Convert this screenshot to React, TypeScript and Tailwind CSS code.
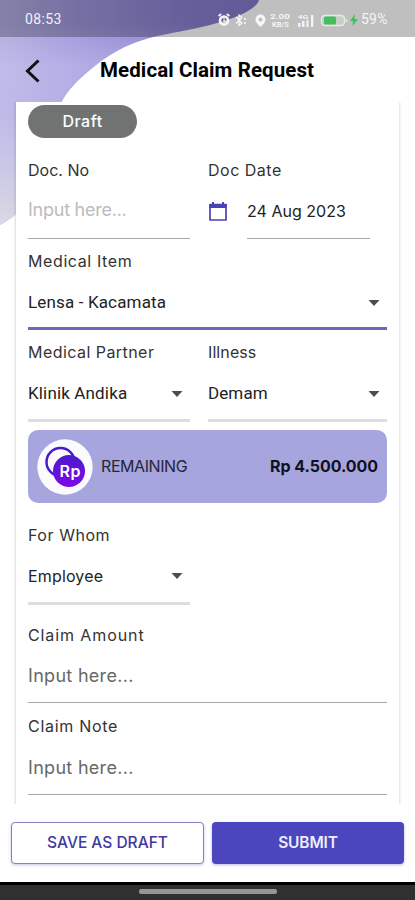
import type { ReactNode } from "react";

function Caret() {
  return (
    <svg width="12" height="6" viewBox="0 0 12 6" className="mr-[7px] shrink-0">
      <path d="M0.5 0h11L6 6z" fill="#4d4d4d" />
    </svg>
  );
}

type FieldProps = {
  label: string;
  labelClass?: string;
  lineClass?: string;
  sizeClass?: string;
  children: ReactNode;
};

function Field({ label, labelClass = "", lineClass = "border-b border-[#a8a8a8] pt-[2px]", sizeClass = "h-[81px]", children }: FieldProps) {
  return (
    <div className={`flex flex-col ${sizeClass}`}>
      <div className="h-6 text-[16px] leading-6 whitespace-nowrap text-[#333]">
        <span className={labelClass}>{label}</span>
      </div>
      <div className={`flex flex-1 items-center justify-between whitespace-nowrap ${lineClass}`}>{children}</div>
    </div>
  );
}

function Backdrop() {
  const shape =
    "M0 0H259C256 10 236 18 210 25C190 30 170 33 153 37C125 44 105 57 90 70C78 80 68 90 62 101C44 150 42 205 0 225Z";
  return (
    <svg className="absolute top-0 left-0" width="260" height="230" viewBox="0 0 260 230">
      <defs>
        <linearGradient id="wave" x1="0" y1="0" x2="1" y2="0">
          <stop offset="0" stopColor="#b0ade0" />
          <stop offset="0.3" stopColor="#9d96da" />
          <stop offset="0.75" stopColor="#877dcd" />
          <stop offset="1" stopColor="#837acc" />
        </linearGradient>
        <linearGradient id="fade" x1="0" y1="0" x2="0" y2="1">
          <stop offset="0.1" stopColor="#e4e1f8" stopOpacity="0" />
          <stop offset="0.3" stopColor="#dcd9fa" stopOpacity="0.35" />
          <stop offset="0.5" stopColor="#d5d0f2" stopOpacity="0.4" />
          <stop offset="1" stopColor="#dcdbe2" stopOpacity="0.95" />
        </linearGradient>
      </defs>
      <path d={shape} fill="url(#wave)" />
      <path d={shape} fill="url(#fade)" />
    </svg>
  );
}

function StatusIcons() {
  return (
    <svg width="132" height="18" viewBox="0 0 132 18" className="shrink-0">
      <g fill="none" stroke="#f7f7f7">
        <circle cx="7" cy="9.5" r="4" strokeWidth="2.6" />
        <path d="M7 7v3l2 1" strokeWidth="1.2" />
        <path d="M1.5 5l2.7-2M12.500 5l-2.700-2" strokeWidth="1.800" />
        <path d="M19 6l6 6-3 2.500V4l3 2.500-6 6" strokeWidth="1.200" />
        <path d="M28 7v2M28 11v2" strokeWidth="1.600" />
      </g>
      <path d="M43.500 3.500a5 5 0 0 0-5 5c0 3.500 5 7.500 5 7.500s5-4 5-7.500a5 5 0 0 0-5-5zm0 3a2 2 0 1 1 0 4 2 2 0 0 1 0-4z" fill="#f7f7f7" fillRule="evenodd" />
      <g fill="#f4f4f4" fontFamily="Roboto, sans-serif" fontWeight="700">
        <text x="53" y="8" fontSize="7.500" textLength="20" lengthAdjust="spacingAndGlyphs">2.00</text>
        <text x="55" y="16" fontSize="6.500" textLength="17" lengthAdjust="spacingAndGlyphs">KB/S</text>
        <text x="80.500" y="7.500" fontSize="6" textLength="11" lengthAdjust="spacingAndGlyphs">4G</text>
      </g>
      <path d="M81 12h2.500v4H81zM85 10h2.500v6H85zM89.500 9h2v7h-2zM94 4h2.300v12H94z" fill="#f4f4f4" />
      <rect x="104.500" y="4.500" width="23" height="10" rx="3.500" fill="#c3d0c5" stroke="#e8e8e8" strokeWidth="1.300" />
      <rect x="107" y="5.500" width="12" height="8" rx="1.500" fill="#43bd5d" />
      <path d="M129.500 8v3" stroke="#e8e8e8" strokeWidth="1.500" />
    </svg>
  );
}

function Bolt() {
  return (
    <svg width="8" height="12" viewBox="0 0 8 12" className="mt-px ml-px shrink-0">
      <path d="M5 0L0 7h3L2.500 12 8 5H4.500z" fill="#43bd5d" />
    </svg>
  );
}

function RupiahBadge() {
  return (
    <svg width="56" height="56" viewBox="0 0 56 56" className="shrink-0">
      <defs>
        <linearGradient id="coin" x1="0" y1="0" x2="0" y2="1">
          <stop offset="0" stopColor="#4b1bcb" />
          <stop offset="1" stopColor="#7f08e6" />
        </linearGradient>
      </defs>
      <circle cx="28" cy="28" r="27.700" fill="#fbfaff" />
      <circle cx="23.500" cy="23" r="14" fill="none" stroke="#4b1bcb" strokeWidth="2.500" />
      <circle cx="32" cy="32" r="16" fill="url(#coin)" />
      <text x="22.500" y="37.500" fontFamily="Inter, sans-serif" fontSize="16" fontWeight="600" fill="#fff" textLength="21">Rp</text>
    </svg>
  );
}

export default function App() {
  const grayLine = "border-b-[3px] border-[#dedede] pt-[5px]";
  return (
    <div className="relative flex h-[900px] w-[415px] flex-col overflow-hidden bg-white font-['Inter',sans-serif] text-[#222]">
      <Backdrop />
      <div className="relative flex h-[37px] shrink-0 items-center bg-black/25 pt-[2px] text-white">
        <span className="ml-[25px] w-[192px] font-['Roboto',sans-serif] text-[14px] tracking-[0.35px] text-[#f1f0fa]">08:53</span>
        <StatusIcons />
        <Bolt />
        <span className="ml-[3px] font-['Roboto',sans-serif] text-[14px] tracking-[0.2px] text-[#f4f4f4]">59%</span>
      </div>
      <header className="relative flex h-[65px] shrink-0 items-center pt-[2px]">
        <svg width="16" height="24" viewBox="0 0 16 24" className="ml-[25px] shrink-0">
          <path d="M13.500 1.500L2.500 12l11 10.500" fill="none" stroke="#111" strokeWidth="3" />
        </svg>
        <h1 className="ml-[59px] font-['Roboto',sans-serif] text-[20.500px] font-bold tracking-[0.1px] whitespace-nowrap text-black">Medical Claim Request</h1>
      </header>
      <div className="relative h-[702px] shrink-0 overflow-hidden px-4">
        <main className="h-[720px] w-[383px] bg-white px-3 pt-[3px] shadow-[0_0_3px_rgba(0,0,0,0.25)]">
          <div className="flex h-[33px] w-[109px] items-center justify-center rounded-full bg-[#707372] pb-[2px] text-[16px] font-medium tracking-[0.5px] text-white">Draft</div>
          <div className="mt-5 flex justify-between">
            <Field label="Doc. No" sizeClass="h-[81px] w-[162px]">
              <span className="-mt-[4px] text-[18px] tracking-[-0.25px] text-[#bcbcbc]">Input here...</span>
            </Field>
            <div className="flex w-[179px]">
              <svg width="20" height="20" viewBox="0 0 20 20" className="mt-[43px] mr-[19px] shrink-0">
                <path d="M2 3.500h16V19H2z" fill="none" stroke="#4842b5" strokeWidth="1.700" strokeLinejoin="round" />
                <path d="M1.500 3h17v4h-17zM4 1h2v3H4zM14 1h2v3h-2z" fill="#4842b5" />
              </svg>
              <Field label="Doc Date" labelClass="-ml-[39px] tracking-[0.5px]" sizeClass="h-[81px] w-[123px]">
                <span className="text-[16px] tracking-[0.02px]">24 Aug 2023</span>
              </Field>
            </div>
          </div>
          <div className="mt-[10px]">
            <Field label="Medical Item" labelClass="tracking-[0.6px]" lineClass="border-b-[3px] border-[#6a6ab6] pt-[5px]">
              <span className="font-['Roboto',sans-serif] text-[17px] tracking-[0.15px]">Lensa - Kacamata</span>
              <Caret />
            </Field>
          </div>
          <div className="mt-[10px] flex justify-between">
            <Field label="Medical Partner" labelClass="tracking-[0.45px]" lineClass={grayLine} sizeClass="h-[82px] w-[162px]">
              <span className="font-['Roboto',sans-serif] text-[17px] tracking-[0.15px]">Klinik Andika</span>
              <Caret />
            </Field>
            <Field label="Illness" labelClass="tracking-[0.1px]" lineClass={grayLine} sizeClass="h-[82px] w-[179px]">
              <span className="font-['Roboto',sans-serif] text-[17px] tracking-[0.1px]">Demam</span>
              <Caret />
            </Field>
          </div>
          <div className="mt-[8px] flex h-[73px] w-[359px] items-center rounded-[10px] bg-[#a6a5de] px-[9px]">
            <RupiahBadge />
            <span className="-mt-[2px] ml-2 text-[16px] tracking-[-0.42px] text-[#262638]">REMAINING</span>
            <span className="-mt-[2px] ml-auto text-[16px] font-bold tracking-[-0.05px] text-[#11111d]">Rp 4.500.000</span>
          </div>
          <div className="mt-[20px] flex flex-col">
            <Field label="For Whom" labelClass="tracking-[0.55px]" lineClass="border-b-[3px] border-[#dedede] pt-[2px]" sizeClass="h-[82px] w-[162px]">
              <span className="text-[16px] tracking-[0.15px]">Employee</span>
              <Caret />
            </Field>
          </div>
          <div className="mt-[18px] flex flex-col gap-[11px]">
            <Field label="Claim Amount" labelClass="tracking-[0.9px]" sizeClass="h-[80px]">
              <span className="text-[18px] tracking-[0.3px] text-[#686868]">Input here...</span>
            </Field>
            <Field label="Claim Note" labelClass="tracking-[0.7px]" sizeClass="h-[81px]">
              <span className="text-[18px] tracking-[0.3px] text-[#686868]">Input here...</span>
            </Field>
          </div>
        </main>
      </div>
      <footer className="relative flex h-[78px] shrink-0 items-start bg-white px-[11px] pt-[18px]">
        <button className="h-[42px] w-[193px] rounded-[4px] border-[1.500px] border-[#8681bd] bg-white text-[15.500px] font-medium text-[#4038a3] shadow-[0_1px_3px_rgba(70,60,180,0.3)]">SAVE AS DRAFT</button>
        <button className="ml-2 h-[42px] w-[192px] rounded-[4px] bg-[#4b46bd] text-[15.500px] font-semibold tracking-[-0.15px] text-[#eeedff] shadow-[0_1px_3px_rgba(70,60,180,0.35)]">SUBMIT</button>
      </footer>
      <div className="relative flex h-[18px] shrink-0 justify-center border-t-[3px] border-black bg-[#303030] pt-[4px]">
        <div className="h-[5px] w-[138px] rounded-[2px] bg-[#969696]" />
      </div>
    </div>
  );
}
